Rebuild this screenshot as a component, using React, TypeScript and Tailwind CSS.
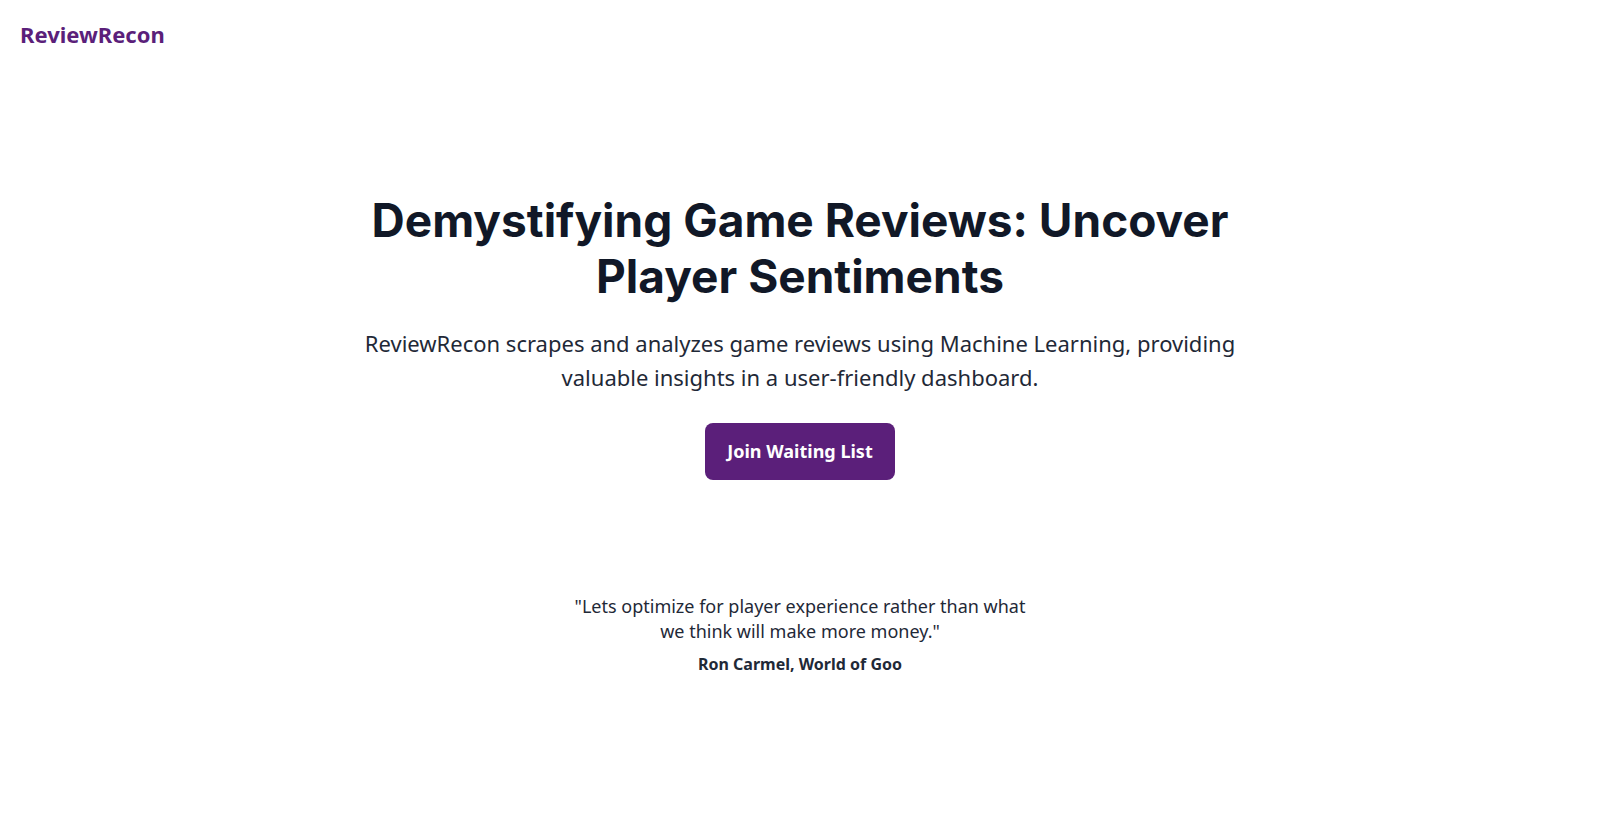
export default function App() {
  const body = { fontFamily: '"Noto Sans", "Open Sans", sans-serif' };
  return (
    <div className="min-h-[834px] bg-white" style={body}>
      <header className="px-5 pt-[18px]">
        <div className="text-[22px] leading-[32px] font-bold text-[#5b1f7a]">ReviewRecon</div>
      </header>
      <main className="flex flex-col items-center text-center">
        <h1
          className="mt-[142px] max-w-[900px] text-[46px] leading-[56px] font-bold text-[#111827]"
          style={{ fontFamily: 'Inter, sans-serif' }}
        >
          Demystifying Game Reviews: Uncover Player Sentiments
        </h1>
        <p className="mt-[22px] max-w-[900px] text-[22px] leading-[34px] text-[#1f2937]">
          ReviewRecon scrapes and analyzes game reviews using Machine Learning, providing valuable insights in a user-friendly dashboard.
        </p>
        <button className="mt-[29px] h-[57px] w-[190px] rounded-lg bg-[#5b1f7a] text-[18px] font-bold text-white">
          Join Waiting List
        </button>
        <p className="mt-[114px] max-w-[460px] text-[18px] leading-[25px] text-[#1f2937]">
          "Lets optimize for player experience rather than what we think will make more money."
        </p>
        <p className="mt-[8px] text-[16px] leading-[24px] font-bold text-[#1f2937]">Ron Carmel, World of Goo</p>
      </main>
    </div>
  );
}
